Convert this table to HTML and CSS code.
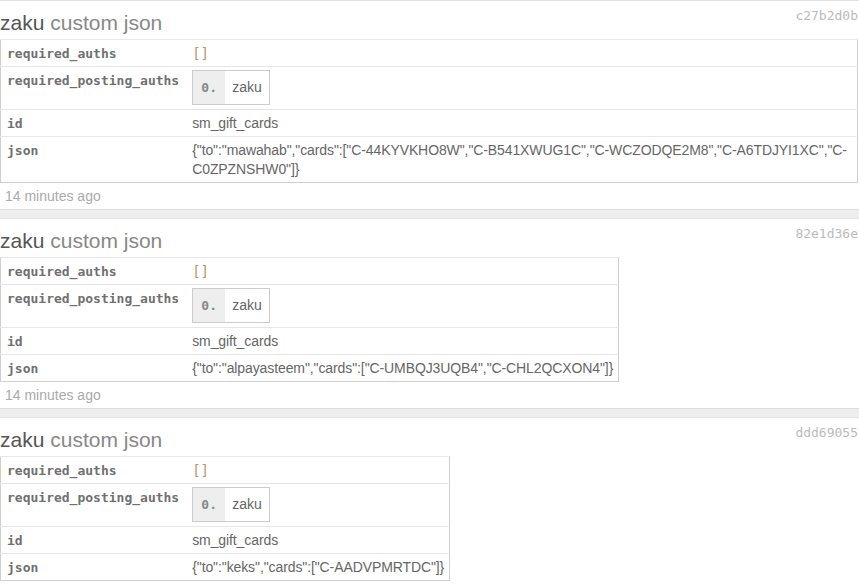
FILE: index.html
```html
<!DOCTYPE html>
<html>
<head>
<meta charset="utf-8">
<link rel="stylesheet" href="styles.css">
</head>
<body>
<div class="feed">
  <div class="card">
    <div class="head">
      <div class="title"><span class="who">zaku</span> <span class="op">custom json</span></div>
      <div class="hash">c27b2d0b</div>
    </div>
    <table class="ops">
      <tr><td class="k">required_auths</td><td class="v"><span class="empty">[]</span></td></tr>
      <tr><td class="k">required_posting_auths</td><td class="v box"><table class="list"><tr><td class="idx">0.</td><td class="item">zaku</td></tr></table></td></tr>
      <tr><td class="k">id</td><td class="v">sm_gift_cards</td></tr>
      <tr><td class="k">json</td><td class="v">{"to":"mawahab","cards":["C-44KYVKHO8W","C-B541XWUG1C","C-WCZODQE2M8","C-A6TDJYI1XC","C-C0ZPZNSHW0"]}</td></tr>
    </table>
    <div class="time">14 minutes ago</div>
  </div>
  <div class="card">
    <div class="head">
      <div class="title"><span class="who">zaku</span> <span class="op">custom json</span></div>
      <div class="hash">82e1d36e</div>
    </div>
    <table class="ops">
      <tr><td class="k">required_auths</td><td class="v"><span class="empty">[]</span></td></tr>
      <tr><td class="k">required_posting_auths</td><td class="v box"><table class="list"><tr><td class="idx">0.</td><td class="item">zaku</td></tr></table></td></tr>
      <tr><td class="k">id</td><td class="v">sm_gift_cards</td></tr>
      <tr><td class="k">json</td><td class="v">{"to":"alpayasteem","cards":["C-UMBQJ3UQB4","C-CHL2QCXON4"]}</td></tr>
    </table>
    <div class="time">14 minutes ago</div>
  </div>
  <div class="card">
    <div class="head">
      <div class="title"><span class="who">zaku</span> <span class="op">custom json</span></div>
      <div class="hash">ddd69055</div>
    </div>
    <table class="ops">
      <tr><td class="k">required_auths</td><td class="v"><span class="empty">[]</span></td></tr>
      <tr><td class="k">required_posting_auths</td><td class="v box"><table class="list"><tr><td class="idx">0.</td><td class="item">zaku</td></tr></table></td></tr>
      <tr><td class="k">id</td><td class="v">sm_gift_cards</td></tr>
      <tr><td class="k">json</td><td class="v">{"to":"keks","cards":["C-AADVPMRTDC"]}</td></tr>
    </table>
    <div class="time">14 minutes ago</div>
  </div>
</div>
</body>
</html>
```
FILE: styles.css
```css
html, body {
  margin: 0;
  padding: 0;
  background: #eeeeee;
  font-family: "Liberation Sans", Arial, sans-serif;
}
.feed {
  display: flex;
  flex-direction: column;
  gap: 8px;
}
.card {
  background: #fff;
  border-top: 1px solid #e2e2e2;
  border-bottom: 1px solid #dcdcdc;
  padding-right: 1px;
}
.head {
  display: flex;
  justify-content: space-between;
  align-items: flex-start;
  height: 38px;
}
.title {
  margin-top: 10px;
  font-size: 21px;
  line-height: 24px;
  white-space: nowrap;
}
.who { color: #555; }
.op { color: #888; }
.hash {
  margin-top: 6px;
  font-family: "DejaVu Sans Mono", monospace;
  font-size: 13px;
  line-height: 17px;
  color: #bbb;
}
.ops {
  border-collapse: collapse;
  border: 1px solid #cfcfcf;
}
.ops > tbody > tr > td,
.ops > tr > td {
  border-top: 1px solid #e6e6e6;
  vertical-align: top;
  line-height: 19px;
}
.k {
  font-family: "DejaVu Sans Mono", monospace;
  font-size: 13px;
  color: #707070;
  white-space: nowrap;
  font-weight: bold;
  padding: 4px 7px 3px 6px;
}
.v {
  font-size: 14px;
  color: #666;
  letter-spacing: -0.1px;
  padding: 4px 5px 3px 6px;
}
.v.box {
  padding-top: 3px;
  padding-bottom: 4px;
}
.empty {
  font-family: "DejaVu Sans Mono", monospace;
  font-size: 14px;
  letter-spacing: 0;
  color: #b9956c;
}
.list {
  border-collapse: collapse;
  border: 1px solid #cccccc;
}
.list td {
  padding: 8px 0;
  line-height: 17px;
  letter-spacing: 0;
}
.idx {
  background: #eeeeee;
  font-family: "DejaVu Sans Mono", monospace;
  font-size: 13px;
  font-weight: bold;
  color: #888;
  width: 32px;
  text-align: center;
}
.list td.item {
  font-size: 14px;
  color: #666;
  padding: 8px 7px;
}
.time {
  padding: 3px 5px;
  line-height: 20px;
  font-size: 14px;
  color: #aaa;
}
```
